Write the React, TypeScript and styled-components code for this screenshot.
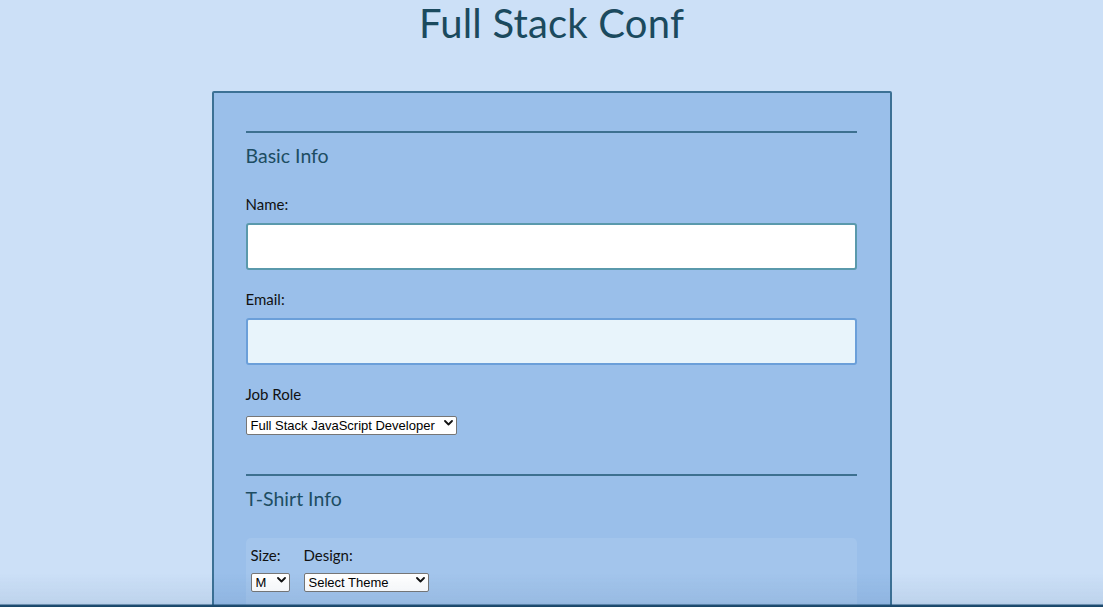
import React from "react";
import styled, { createGlobalStyle } from "styled-components";

const GlobalStyle = createGlobalStyle`
  html, body {
    margin: 0;
    padding: 0;
    background: #cce0f7;
    font-family: "Lato", "Noto Sans", sans-serif;
    overflow: hidden;
  }
`;

const Page = styled.div`
  min-height: 607px;
  display: flex;
  flex-direction: column;
  align-items: center;
`;

const Title = styled.h1`
  margin: 0;
  padding-top: 1px;
  font-size: 40px;
  line-height: 44px;
  font-weight: 400;
  color: #1b4a5e;
  text-align: center;
  letter-spacing: 0.2px;
`;

const Form = styled.form`
  box-sizing: border-box;
  width: 680px;
  margin-top: 46px;
  background: #9abfea;
  border: 2px solid #3c7195;
  border-radius: 2px;
  padding: 38px 33px 40px 32px;
  display: flex;
  flex-direction: column;
`;

const Fieldset = styled.fieldset`
  margin: 0;
  padding: 0;
  border: none;
  border-top: 2px solid #3d7090;
  display: flex;
  flex-direction: column;
`;

const Legend = styled.div`
  font-size: 19.5px;
  line-height: 24px;
  color: #1d4d63;
  margin: 11px 0 27px;
`;

const Label = styled.label`
  font-size: 15px;
  line-height: 18px;
  color: #111;
  margin-bottom: 10px;
`;

const TextInput = styled.input<{ $variant?: "focus" | "plain" }>`
  box-sizing: border-box;
  height: 47px;
  width: 100%;
  border-radius: 3px;
  border: 2px solid ${(p) => (p.$variant === "focus" ? "#6b9fd9" : "#5a99ac")};
  background: ${(p) => (p.$variant === "focus" ? "#e8f4fb" : "#ffffff")};
  margin: 0 0 20px;
  outline: none;
  font-size: 15px;
  padding: 0 10px;
`;

const SelectWrap = styled.span<{ $w: number }>`
  position: relative;
  display: inline-block;
  width: ${(p) => p.$w}px;
  height: 19px;
`;

const Select = styled.select`
  appearance: none;
  -webkit-appearance: none;
  box-sizing: border-box;
  width: 100%;
  height: 19px;
  border: 1px solid #767676;
  border-radius: 2px;
  background: #ffffff;
  color: #000;
  font-family: "Liberation Sans", Arial, sans-serif;
  font-size: 13px;
  line-height: 17px;
  padding: 0 18px 0 4px;
  margin: 0;
`;

const Chevron = styled.svg`
  position: absolute;
  right: 4px;
  top: 6px;
  width: 9px;
  height: 6px;
  pointer-events: none;
`;

const Row = styled.div`
  display: flex;
  margin-top: 1px;
  margin-bottom: 41px;
`;

const ShirtBox = styled.div`
  background: #a3c5ec;
  border-radius: 5px;
  padding: 8px 5px 20px;
  display: flex;
  gap: 14px;
`;

const ShirtCol = styled.div`
  display: flex;
  flex-direction: column;
`;

const ShirtLabel = styled.label`
  font-size: 15px;
  line-height: 18px;
  color: #111;
  margin-bottom: 7px;
`;

const BottomShade = styled.div`
  position: fixed;
  left: 0;
  right: 0;
  bottom: 0;
  height: 34px;
  pointer-events: none;
  background: linear-gradient(
    to bottom,
    rgba(40, 80, 130, 0) 0px,
    rgba(40, 80, 130, 0.08) 28px,
    rgba(40, 80, 130, 0.12) 31px,
    #1f4f74 32px,
    #1a4466 34px
  );
`;

const Drop = ({ w, children }: { w: number; children: React.ReactNode }) => (
  <SelectWrap $w={w}>
    <Select>{children}</Select>
    <Chevron viewBox="0 0 9 6">
      <path d="M1 1 L4.5 4.5 L8 1" fill="none" stroke="#111" strokeWidth="1.8" strokeLinecap="round" strokeLinejoin="round" />
    </Chevron>
  </SelectWrap>
);

export default function App() {
  return (
    <>
      <GlobalStyle />
      <Page>
        <Title>Full Stack Conf</Title>
        <Form>
          <Fieldset>
            <Legend>Basic Info</Legend>
            <Label htmlFor="name">Name:</Label>
            <TextInput id="name" type="text" $variant="plain" />
            <Label htmlFor="mail">Email:</Label>
            <TextInput id="mail" type="email" $variant="focus" />
            <Label htmlFor="title">Job Role</Label>
            <Row>
              <Drop w={211}>
                <option>Full Stack JavaScript Developer</option>
                <option>Front End Developer</option>
                <option>Back End Developer</option>
              </Drop>
            </Row>
          </Fieldset>
          <Fieldset>
            <Legend>T-Shirt Info</Legend>
            <ShirtBox>
              <ShirtCol>
                <ShirtLabel>Size:</ShirtLabel>
                <Drop w={39}>
                  <option>M</option>
                  <option>S</option>
                  <option>L</option>
                  <option>XL</option>
                </Drop>
              </ShirtCol>
              <ShirtCol>
                <ShirtLabel>Design:</ShirtLabel>
                <Drop w={125}>
                  <option>Select Theme</option>
                  <option>Theme - JS Puns</option>
                  <option>Theme - I ♥ JS</option>
                </Drop>
              </ShirtCol>
            </ShirtBox>
          </Fieldset>
        </Form>
      </Page>
      <BottomShade />
    </>
  );
}
